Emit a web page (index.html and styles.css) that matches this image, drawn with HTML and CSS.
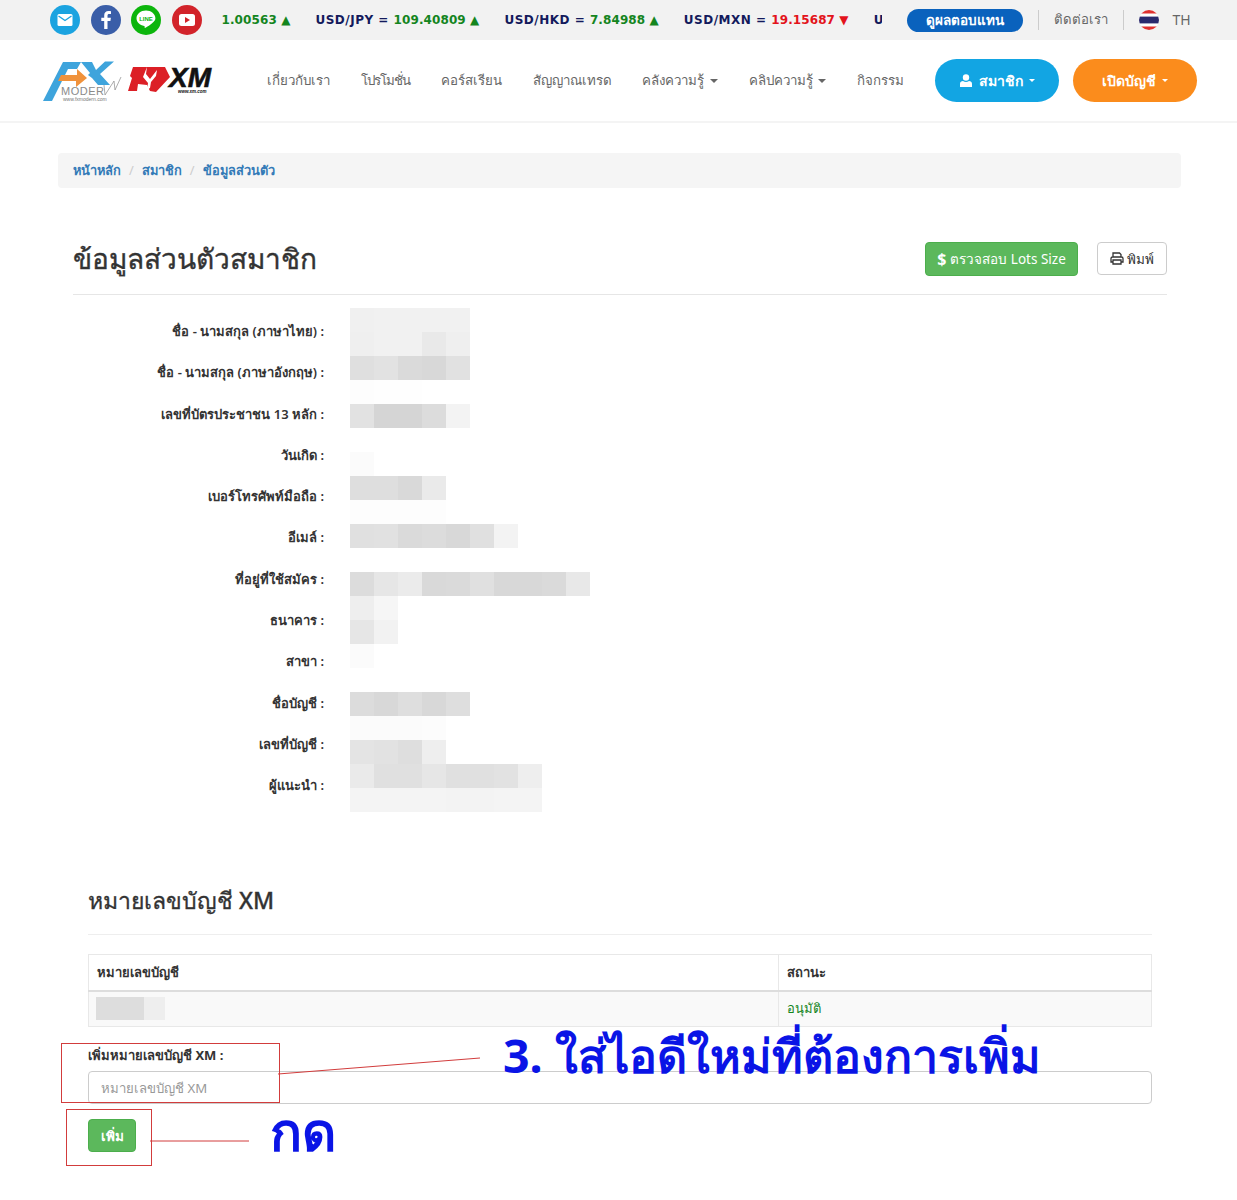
FILE: index.html
```html
<!DOCTYPE html>
<html lang="th">
  <head>
    <meta charset="UTF-8" />
    <meta name="viewport" content="width=device-width, initial-scale=1.0" />
    <title>ข้อมูลส่วนตัวสมาชิก</title>
    <link rel="stylesheet" href="styles.css">
  </head>
  <body>
    <div class="topbar">
      <div class="social">
        <a class="social-icon icon-mail"><svg viewBox="0 0 30 30"><rect x="7.500" y="9" width="15" height="12" rx="1.500" fill="#fff"/><path d="M8.500 11l6.500 4.500 6.500-4.500" fill="none" stroke="#1ba3e0" stroke-width="1.400"/></svg></a>
        <a class="social-icon icon-fb"><svg viewBox="0 0 30 30"><path d="M16.500 24v-8h2.900l.5-3.300h-3.400v-2c0-1 .4-1.600 1.700-1.600h1.800V6.300c-.6-.1-1.500-.2-2.500-.2-2.700 0-4.300 1.600-4.300 4.300v2.300h-2.900V16h2.900v8z" fill="#fff"/></svg></a>
        <a class="social-icon icon-line"><svg viewBox="0 0 30 30"><path d="M15 5.500c-5.200 0-9.500 3.400-9.500 7.800 0 3.800 3.300 7 7.700 7.600.6.100.5.800.4 1.400-.1.600.3.800.9.500 1.600-.9 5.800-3.400 7.900-5.700 1.400-1.300 2-2.500 2-3.800 0-4.400-4.300-7.800-9.400-7.800z" fill="#fff"/><text x="15" y="15.500" class="line-word">LINE</text></svg></a>
        <a class="social-icon icon-yt"><svg viewBox="0 0 30 30"><rect x="7" y="9" width="16" height="12" rx="2.500" fill="#fff"/><path d="M13 12l5 3-5 3z" fill="#d2232a"/></svg></a>
      </div>
      <div class="ticker">
        <span class="tick"><b class="up">1.00563 ▲</b></span>
        <span class="tick">USD/JPY = <b class="up">109.40809 ▲</b></span>
        <span class="tick">USD/HKD = <b class="up">7.84988 ▲</b></span>
        <span class="tick">USD/MXN = <b class="down">19.15687 ▼</b></span>
        <span class="tick">USD/ZAR</span>
      </div>
      <a class="result-btn">ดูผลตอบแทน</a>
      <span class="top-sep"></span>
      <a class="top-link">ติดต่อเรา</a>
      <span class="top-sep"></span>
      <svg class="flag" viewBox="0 0 20 20"><defs><clipPath id="flag-clip"><circle cx="10" cy="10" r="10"/></clipPath></defs><g clip-path="url(#flag-clip)"><rect width="20" height="20" fill="#fff"/><rect width="20" height="3.500" fill="#e0312f"/><rect y="16.500" width="20" height="3.500" fill="#e0312f"/><rect y="6.600" width="20" height="6.800" fill="#2b2a6e"/></g></svg>
      <a class="top-link lang">TH</a>
    </div>

    <header class="mainnav">
      <svg class="logo" viewBox="0 0 170 44">
        <path d="M0 42L20 3h18l-4 7H25l-3 6h8l-3 6H19L9 42z" fill="#3ea4dc"/>
        <path d="M15 22l3-6h16v-6l10 9-11 9v-6z" fill="#f0923c"/>
        <path d="M38 3h11l4 8 9-8.500h9L57 15l10 11H55l-6-7-4-3 2-2z" fill="#3ea4dc"/>
        <text x="18" y="36" class="logo-modern">MODER</text>
        <path d="M61 26l1 10 9-14 1 9 6-13" fill="none" stroke="#8a8a8a" stroke-width=".7"/>
        <text x="20" y="42" class="logo-url">www.fxmodern.com</text>
        <path d="M90 8h32l5 10-14 15-6-1-3-6-9-1-1 7h-9l4-13-2-2z" fill="#dc1f26"/>
        <path d="M104 8l-1 7 4 5 7-9-1 6-5 6-1 6-3 2 1-7-5-6z" fill="#fff"/>
        <text x="126" y="28" class="logo-xm">XM</text>
        <text x="135" y="34" class="logo-xmurl">www.xm.com</text>
      </svg>
      <nav class="navlinks">
        <a>เกี่ยวกับเรา</a>
        <a class="link-tight">โปรโมชั่น</a>
        <a>คอร์สเรียน</a>
        <a>สัญญาณเทรด</a>
        <a>คลังความรู้ <i class="caret"></i></a>
        <a>คลิปความรู้ <i class="caret"></i></a>
        <a>กิจกรรม</a>
      </nav>
      <div class="nav-actions">
        <a class="pill pill-blue">
          <svg class="user-icon" viewBox="0 0 12 13"><circle cx="6" cy="3.500" r="3.200" fill="#fff"/><path d="M0 13V9.800C0 8 1.500 7 3 7c1 .8 2 1.100 3 1.100S8 7.800 9 7c1.500 0 3 1 3 2.800V13z" fill="#fff"/></svg>
          สมาชิก <i class="caret"></i>
        </a>
        <a class="pill pill-orange">เปิดบัญชี <i class="caret"></i></a>
      </div>
    </header>

    <ol class="breadcrumb">
      <li><a>หน้าหลัก</a></li>
      <li><a>สมาชิก</a></li>
      <li><a>ข้อมูลส่วนตัว</a></li>
    </ol>

    <main class="content">
      <div class="page-head">
        <h1>ข้อมูลส่วนตัวสมาชิก</h1>
        <a class="btn btn-green"><b>$</b> ตรวจสอบ Lots Size</a>
        <a class="btn btn-print">
          <svg class="print-icon" viewBox="0 0 14 13"><path d="M3 5V1h6.500L11 2.500V5M3 10H1V6.500Q1 5 2.500 5h9Q13 5 13 6.500V10h-2M3 8h8v4H3z" fill="none" stroke="#333" stroke-width="1.300"/></svg>
          พิมพ์
        </a>
      </div>

      <div class="profile">
        <div class="profile-labels">
          <div>ชื่อ - นามสกุล (ภาษาไทย) :</div>
          <div>ชื่อ - นามสกุล (ภาษาอังกฤษ) :</div>
          <div>เลขที่บัตรประชาชน 13 หลัก :</div>
          <div>วันเกิด :</div>
          <div>เบอร์โทรศัพท์มือถือ :</div>
          <div>อีเมล์ :</div>
          <div>ที่อยู่ที่ใช้สมัคร :</div>
          <div>ธนาคาร :</div>
          <div>สาขา :</div>
          <div>ชื่อบัญชี :</div>
          <div>เลขที่บัญชี :</div>
          <div>ผู้แนะนำ :</div>
        </div>
        <svg id="mosaic" class="mosaic" width="240" height="504" viewBox="0 0 240 504"></svg>
      </div>

      <section class="accounts">
        <h2>หมายเลขบัญชี XM</h2>
        <table class="acc-table">
          <thead>
            <tr><th class="col-num">หมายเลขบัญชี</th><th>สถานะ</th></tr>
          </thead>
          <tbody>
            <tr>
              <td><span class="acc-blur"><i></i><i></i></span></td>
              <td class="approved">อนุมัติ</td>
            </tr>
          </tbody>
        </table>
        <label class="add-label" for="acc-input">เพิ่มหมายเลขบัญชี XM :</label>
        <input class="add-input" id="acc-input" type="text" placeholder="หมายเลขบัญชี XM" />
        <a class="btn btn-green btn-add">เพิ่ม</a>
      </section>
    </main>

    <!-- red marks and captions drawn over the screenshot -->
    <svg class="marks" viewBox="0 0 1237 1200">
      <rect x="61.500" y="1043.500" width="218" height="59" />
      <rect x="66.500" y="1109.500" width="85" height="56" />
      <path d="M278 1074L480 1058" />
      <path d="M150 1141H249" />
    </svg>
    <div class="caption caption-add">3. ใส่ไอดีใหม่ที่ต้องการเพิ่ม</div>
    <div class="caption caption-press">กด</div>

    <script>
      // pixelated blocks that hide the member data: [row, colours by column]
      const rows = [
        [0, ["#f0f0f0", "#f1f1f1", "#f1f1f1", "#f1f1f1", "#f1f1f1"]],
        [1, ["#efefef", "#f1f1f1", "#f1f1f1", "#e9e9e9", "#efefef"]],
        [2, ["#dfdfdf", "#e2e2e2", "#dadada", "#d8d8d8", "#e1e1e1"]],
        [3, ["#fdfdfd", "#fefefe", "#fefefe"]],
        [4, ["#e2e2e2", "#d5d5d5", "#d5d5d5", "#dcdcdc", "#f3f3f3"]],
        [6, ["#fbfbfb"]],
        [7, ["#dedede", "#dedede", "#d9d9d9", "#eaeaea"]],
        [8, ["#fdfdfd", "#fdfdfd", "#fdfdfd", "#fdfdfd"]],
        [9, ["#e0e0e0", "#e1e1e1", "#dadada", "#dcdcdc", "#d8d8d8", "#e0e0e0", "#f3f3f3"]],
        [11, ["#dcdcdc", "#e6e6e6", "#ebebeb", "#d9d9d9", "#dadada", "#e0e0e0", "#d8d8d8", "#d8d8d8", "#dadada", "#e8e8e8"]],
        [12, ["#eeeeee", "#f6f6f6"]],
        [13, ["#e6e6e6", "#f2f2f2"]],
        [14, ["#fbfbfb"]],
        [16, ["#dcdcdc", "#d8d8d8", "#dedede", "#d8d8d8", "#dedede"]],
        [17, ["#fbfbfb", "#fbfbfb", "#fbfbfb", "#fcfcfc"]],
        [18, ["#e4e4e4", "#e2e2e2", "#dedede", "#eeeeee"]],
        [19, ["#eaeaea", "#e0e0e0", "#e0e0e0", "#e6e6e6", "#e0e0e0", "#e0e0e0", "#e2e2e2", "#eeeeee"]],
        [20, ["#f4f4f4", "#f4f4f4", "#f4f4f4", "#f4f4f4", "#f3f3f3", "#f3f3f3", "#f4f4f4", "#f4f4f4"]],
      ];
      const mosaic = document.getElementById("mosaic");
      rows.forEach(([row, colours]) => {
        colours.forEach((colour, col) => {
          const cell = document.createElementNS("http://www.w3.org/2000/svg", "rect");
          cell.setAttribute("x", col * 24);
          cell.setAttribute("y", row * 24);
          cell.setAttribute("width", 24);
          cell.setAttribute("height", 24);
          cell.setAttribute("fill", colour);
          mosaic.appendChild(cell);
        });
      });
    </script>
  </body>
</html>
```

FILE: styles.css
```css
* {
  margin: 0;
  padding: 0;
  box-sizing: border-box;
}

body {
  position: relative;
  width: 1237px;
  height: 1200px;
  overflow: hidden;
  background: #fff;
  color: #333;
  font-family: "Noto Sans", "DejaVu Sans", "Noto Sans CJK SC", sans-serif;
  font-size: 13px;
}

/* top strip */
.topbar {
  display: flex;
  align-items: center;
  height: 40px;
  padding-left: 50px;
  background: #f2f2f2;
}

.social {
  display: flex;
  gap: 10.500px;
}

.social-icon {
  display: block;
  width: 30px;
  height: 30px;
  border-radius: 50%;
}

.social-icon svg {
  display: block;
}

.icon-mail { background: #1ba3e0; }
.icon-fb { background: #3a5ea8; }
.icon-line { background: #0cb50c; }
.icon-yt { background: #d2232a; }

.line-word {
  font-family: "Liberation Sans", sans-serif;
  font-size: 6px;
  font-weight: 700;
  fill: #0cb50c;
  text-anchor: middle;
}

.ticker {
  display: flex;
  gap: 25px;
  width: 660px;
  margin-left: 20px;
  overflow: hidden;
  white-space: nowrap;
  color: #131a5c;
  font-family: "DejaVu Sans", sans-serif;
  font-size: 12px;
  font-weight: 700;
  letter-spacing: .5px;
}

.up,
.down {
  letter-spacing: .1px;
}

.up { color: #14851e; }
.down { color: #e3131b; }

.result-btn {
  width: 116px;
  height: 23px;
  margin-left: 25px;
  border-radius: 12px;
  background: #0a62bd;
  color: #fff;
  font-size: 13.500px;
  font-weight: 700;
  line-height: 23px;
  text-align: center;
}

.top-sep {
  width: 1px;
  height: 20px;
  margin: 0 15px;
  background: #ccc;
}

.top-link {
  margin-top: -2px;
  color: #666;
  font-size: 13.200px;
}

.flag {
  width: 20px;
  height: 20px;
  margin-top: -1px;
}

.lang {
  margin-left: 14px;
  font-size: 14px;
}

/* main nav */
.mainnav {
  display: flex;
  align-items: center;
  height: 83px;
  padding-left: 43px;
  border-bottom: 2px solid #f4f4f4;
}

.logo {
  width: 170px;
  height: 44px;
}

.logo-modern {
  font-family: "Liberation Sans", sans-serif;
  font-size: 11px;
  letter-spacing: .5px;
  fill: #8a8a8a;
}

.logo-url {
  font-family: "Liberation Sans", sans-serif;
  font-size: 5px;
  fill: #777;
}

.logo-xm {
  font-family: "Liberation Sans", sans-serif;
  font-size: 28px;
  font-weight: 700;
  font-style: italic;
  fill: #111;
  stroke: #111;
  stroke-width: .6px;
}

.logo-xmurl {
  font-family: "Liberation Sans", sans-serif;
  font-size: 4.500px;
  font-weight: 700;
  font-style: italic;
  fill: #111;
}

.navlinks {
  display: flex;
  justify-content: space-between;
  width: 637px;
  margin-left: 54px;
  color: #666;
  font-size: 13.300px;
  white-space: nowrap;
}

.link-tight {
  letter-spacing: -1px;
}

.caret {
  display: inline-block;
  margin-left: 2px;
  vertical-align: middle;
  border-top: 4px solid currentColor;
  border-left: 4px solid transparent;
  border-right: 4px solid transparent;
}

.nav-actions {
  display: flex;
  gap: 14px;
  margin-left: 31px;
}

.pill {
  display: flex;
  align-items: center;
  justify-content: center;
  gap: 6px;
  width: 124px;
  height: 43px;
  border-radius: 22px;
  color: #fff;
  font-size: 14px;
  font-weight: 600;
}

.pill-blue { background: #12a5e3; }
.pill-orange { background: #fb8c1c; }

.pill .caret {
  margin-left: 0;
  border-top-width: 3px;
  border-left-width: 3px;
  border-right-width: 3px;
}

.user-icon {
  width: 12px;
  height: 13px;
  margin-right: 1px;
}

/* breadcrumb */
.breadcrumb {
  display: flex;
  align-items: center;
  height: 35px;
  margin: 30px 56px 0 58px;
  padding-left: 15px;
  padding-bottom: 1px;
  border-radius: 4px;
  background: #f5f5f5;
  list-style: none;
  color: #337ab7;
  font-size: 12.800px;
  font-weight: 600;
}

.breadcrumb li + li::before {
  content: "/";
  margin: 0 8px;
  color: #ccc;
  font-weight: 400;
}

/* page body */
.content {
  padding: 54px 70px 0 73px;
}

.page-head {
  display: flex;
  align-items: center;
  height: 53px;
  padding-bottom: 19px;
  border-bottom: 1px solid #e6e6e6;
}

.page-head h1 {
  flex: 1;
  color: #333;
  font-size: 28px;
  font-weight: 500;
  -webkit-text-stroke: .4px #333;
}

.btn {
  display: flex;
  align-items: center;
  justify-content: center;
  border-radius: 4px;
  font-size: 13.500px;
}

.btn-green {
  background: #5cb85c;
  border: 1px solid #4cae4c;
  color: #fff;
}

.page-head .btn-green {
  gap: 4px;
  width: 153px;
  height: 34px;
}

.btn-green b {
  font-size: 16px;
}

.btn-print {
  gap: 3px;
  width: 70px;
  height: 33px;
  margin-left: 19px;
  border: 1px solid #ccc;
  background: #fff;
  color: #333;
}

.print-icon {
  width: 14px;
  height: 13px;
}

.profile {
  display: flex;
  margin-top: 13px;
}

.profile-labels {
  display: flex;
  flex-direction: column;
  width: 251px;
  padding-top: 3px;
  font-size: 13px;
  font-weight: 600;
  text-align: right;
}

.profile-labels div {
  height: 41.300px;
  line-height: 41.300px;
  white-space: nowrap;
}

.mosaic {
  display: block;
  margin-left: 26px;
}

.accounts {
  margin: 72px 15px 0;
}

.accounts h2 {
  height: 51px;
  border-bottom: 1px solid #eee;
  color: #333;
  font-size: 23px;
  font-weight: 500;
  line-height: 33px;
  -webkit-text-stroke: .3px #333;
}

.acc-table {
  width: 100%;
  margin-top: 19px;
  border-collapse: collapse;
  font-size: 13px;
}

.acc-table th,
.acc-table td {
  border: 1px solid #e8e8e8;
  padding: 0 8px;
  text-align: left;
}

.acc-table th {
  height: 36px;
  border-bottom: 2px solid #ddd;
  font-weight: 700;
}

.col-num {
  width: 690px;
}

.acc-table td {
  height: 36px;
  background: #f9f9f9;
}

.acc-blur {
  display: flex;
  height: 23px;
  margin-left: -1px;
}

.acc-blur i:first-child {
  width: 48px;
  background: #ddd;
}

.acc-blur i:last-child {
  width: 21px;
  background: #eee;
}

.approved {
  color: #14851e;
}

.add-label {
  display: block;
  margin-top: 18px;
  font-size: 13px;
  font-weight: 700;
  line-height: 20px;
}

.add-input {
  display: block;
  width: 100%;
  height: 33px;
  margin-top: 6px;
  padding: 0 12px;
  border: 1px solid #ccc;
  border-radius: 4px;
  font: inherit;
  font-size: 13.200px;
}

.add-input::placeholder {
  color: #999;
}

.btn-add {
  width: 48px;
  height: 33px;
  margin-top: 15px;
  font-weight: 700;
}

/* annotations over the page */
.marks {
  position: absolute;
  top: 0;
  left: 0;
  width: 1237px;
  height: 1200px;
  pointer-events: none;
}

.marks rect,
.marks path {
  fill: none;
  stroke: #d23c3c;
  stroke-width: 1;
}

.caption {
  position: absolute;
  color: #0a14e6;
  font-weight: 700;
  line-height: 1;
  white-space: nowrap;
}

.caption-add {
  left: 503px;
  top: 1032px;
  font-size: 46.500px;
}

.caption-press {
  left: 270px;
  top: 1104px;
  font-size: 53px;
}
```
